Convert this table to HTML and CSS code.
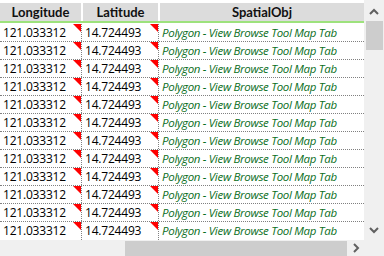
FILE: index.html
```html
<!DOCTYPE html>
<html>
<head>
<meta charset="utf-8">
<link rel="stylesheet" href="styles.css">
</head>
<body>
<div class="frame">
  <div class="table">
    <div class="head">
      <div class="hc c1">Longitude</div>
      <div class="hc c2">Latitude</div>
      <div class="hc c3">SpatialObj</div>
    </div>
    <div class="body" id="rows">
      <div class="row"><div class="cell c1 mark">121.033312</div><div class="cell c2 mark">14.724493</div><div class="cell c3 link">Polygon - View Browse Tool Map Tab</div></div>
      <div class="row"><div class="cell c1 mark">121.033312</div><div class="cell c2 mark">14.724493</div><div class="cell c3 link">Polygon - View Browse Tool Map Tab</div></div>
      <div class="row"><div class="cell c1 mark">121.033312</div><div class="cell c2 mark">14.724493</div><div class="cell c3 link">Polygon - View Browse Tool Map Tab</div></div>
      <div class="row"><div class="cell c1 mark">121.033312</div><div class="cell c2 mark">14.724493</div><div class="cell c3 link">Polygon - View Browse Tool Map Tab</div></div>
      <div class="row"><div class="cell c1 mark">121.033312</div><div class="cell c2 mark">14.724493</div><div class="cell c3 link">Polygon - View Browse Tool Map Tab</div></div>
      <div class="row"><div class="cell c1 mark">121.033312</div><div class="cell c2 mark">14.724493</div><div class="cell c3 link">Polygon - View Browse Tool Map Tab</div></div>
      <div class="row"><div class="cell c1 mark">121.033312</div><div class="cell c2 mark">14.724493</div><div class="cell c3 link">Polygon - View Browse Tool Map Tab</div></div>
      <div class="row"><div class="cell c1 mark">121.033312</div><div class="cell c2 mark">14.724493</div><div class="cell c3 link">Polygon - View Browse Tool Map Tab</div></div>
      <div class="row"><div class="cell c1 mark">121.033312</div><div class="cell c2 mark">14.724493</div><div class="cell c3 link">Polygon - View Browse Tool Map Tab</div></div>
      <div class="row"><div class="cell c1 mark">121.033312</div><div class="cell c2 mark">14.724493</div><div class="cell c3 link">Polygon - View Browse Tool Map Tab</div></div>
      <div class="row"><div class="cell c1 mark">121.033312</div><div class="cell c2 mark">14.724493</div><div class="cell c3 link">Polygon - View Browse Tool Map Tab</div></div>
      <div class="row last"><div class="cell c1 mark">121.033312</div><div class="cell c2 mark">14.724493</div><div class="cell c3 link">Polygon - View Browse Tool Map Tab</div></div>
    </div>
  </div>
  <div class="vscroll">
    <svg class="arrow" width="20" height="24" viewBox="0 0 20 24"><path d="M6 14 L10 10 L14 14" fill="none" stroke="#606060" stroke-width="2"/></svg>
    <div class="vthumb"></div>
    <div class="vspace"></div>
    <svg class="arrow" width="20" height="18" viewBox="0 0 20 18"><path d="M6 6 L10 10 L14 6" fill="none" stroke="#606060" stroke-width="2"/></svg>
  </div>
  <div class="hscroll">
    <div class="hspace"></div>
    <div class="hthumb"></div>
    <svg class="harrow" width="17" height="16" viewBox="0 0 17 16"><path d="M7 4 L11 8 L7 12" fill="none" stroke="#606060" stroke-width="2"/></svg>
  </div>
  <div class="corner"></div>
</div>
</body>
</html>
```

FILE: styles.css
```css
html, body {
  margin: 0;
  padding: 0;
  background: #ffffff;
}
body {
  width: 384px;
  height: 256px;
  overflow: hidden;
  font-family: "Open Sans", "Liberation Sans", sans-serif;
  font-size: 12px;
  color: #000;
}
.frame {
  display: grid;
  grid-template-columns: 364px 20px;
  grid-template-rows: 240px 16px;
  width: 384px;
  height: 256px;
}
.table {
  display: flex;
  flex-direction: column;
  background: #fff;
  overflow: hidden;
}
.head {
  display: flex;
  gap: 2px;
  padding-top: 3px;
  border-bottom: 2px solid #9de27c;
  margin-bottom: 1px;
}
.hc {
  height: 18px;
  background: #dcdcdc;
  font-family: Lato, "Open Sans", sans-serif;
  font-weight: 700;
  text-align: center;
  line-height: 18px;
  font-size: 13px;
  color: #111;
}
.head .c1 { width: 81px; }
.head .c2 { width: 75px; }
.head .c3 { flex: 1; }
.row {
  display: flex;
  height: 18px;
  border-bottom: 1px dotted #808080;
  box-sizing: border-box;
}
.row.last { border-bottom: none; }
.cell {
  position: relative;
  line-height: 17px;
  white-space: nowrap;
  box-sizing: border-box;
  border-right: 1px dotted #808080;
  letter-spacing: -0.2px;
}
.row .c1 { width: 82px; padding-left: 3px; }
.row .c2 { width: 77px; padding-left: 3px; }
.row .c3 { flex: 1; padding-left: 3px; border-right: none; }
.mark::after {
  content: "";
  position: absolute;
  top: 0;
  right: 0;
  width: 0;
  height: 0;
  border-top: 8px solid #ff0000;
  border-left: 8px solid transparent;
}
.link {
  font-style: italic;
  font-size: 11.5px;
  letter-spacing: -0.3px;
  color: #0a6e22;
}
.vscroll {
  background: #f0f0f0;
  display: flex;
  flex-direction: column;
  align-items: center;
}
.arrow { display: block; flex: none; }
.vthumb {
  width: 17px;
  height: 29px;
  background: #cdcdcd;
  margin-top: -3px;
}
.vspace { flex: 1; }
.hscroll {
  background: #f0f0f0;
  display: flex;
  align-items: stretch;
}
.hspace { width: 125px; }
.hthumb {
  width: 222px;
  background: #cdcdcd;
  margin-top: 1px;
}
.harrow { display: block; }
.corner { background: #f0f0f0; }
```
